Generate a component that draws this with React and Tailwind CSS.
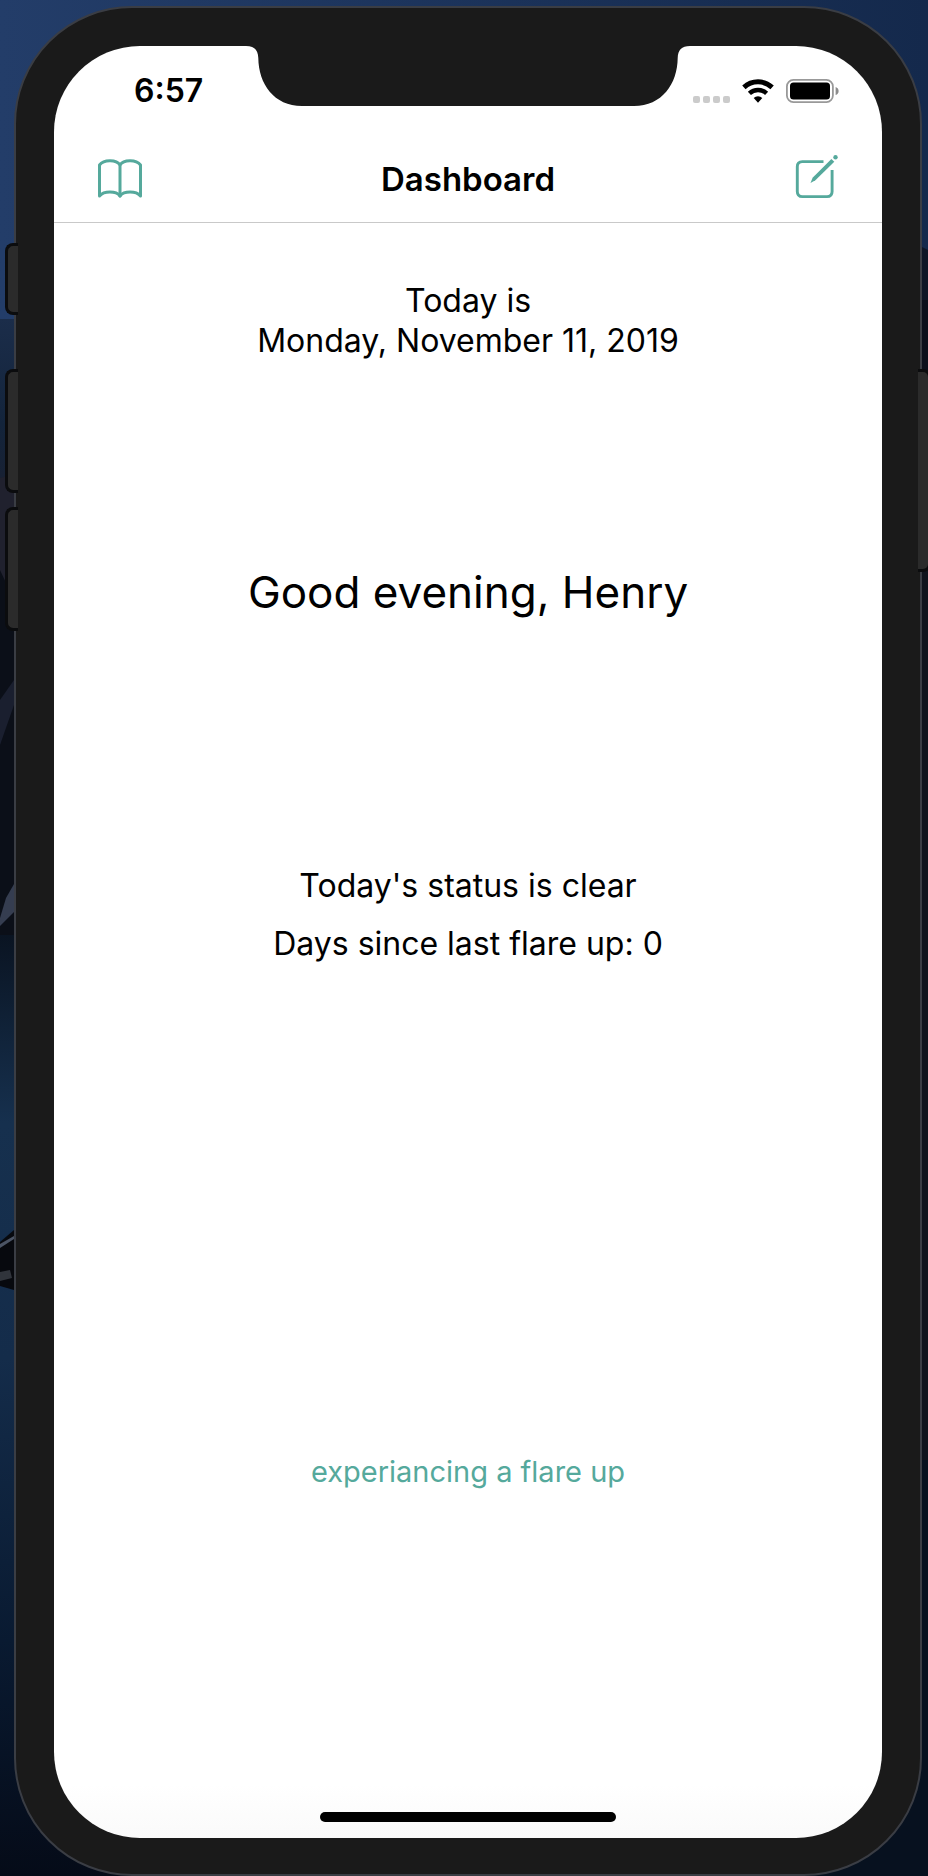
const BookIcon = () => (
  <svg viewBox="0 0 44 40" className="h-10 w-11" fill="none" stroke="currentColor" strokeWidth="3" strokeLinejoin="round" strokeLinecap="round" aria-hidden="true">
    <path d="M22 6C18.500 0.700 6 0.200 1.500 6V37C6 31.800 18 31.800 22 37C26 31.800 38 31.800 42.500 37V6C38 0.200 25.500 0.700 22 6Z" />
    <path d="M22 6V37" />
  </svg>
);

const ComposeIcon = () => (
  <svg viewBox="0 0 44 44" className="size-11" fill="none" stroke="currentColor" strokeWidth="2.900" aria-hidden="true">
    <path d="M29.500 6.600H8.400Q3.300 6.600 3.300 11.700V36.500Q3.300 41.600 8.400 41.600H33Q38.100 41.600 38.100 36.500V15" />
    <path d="M37.400 3.900L40.300 6.800L21.400 25.300L16.500 27.900L18.600 22.700Z" fill="currentColor" stroke="none" />
    <circle cx="41.500" cy="2.300" r="2.200" fill="currentColor" stroke="none" />
  </svg>
);

const WifiIcon = () => (
  <svg viewBox="0 0 32 24" className="h-6 w-8" fill="none" stroke="#000" strokeWidth="4.900" aria-hidden="true">
    <path d="M1.900 8.400A20.500 20.500 0 0 1 30.100 8.400" />
    <path d="M7.400 14.300A12.600 12.600 0 0 1 24.600 14.300" strokeWidth="4.500" />
    <path d="M11.700 19.100A6.200 6.200 0 0 1 20.300 19.100L16 23.700Z" fill="#000" stroke="none" />
  </svg>
);

const BatteryIcon = () => (
  <svg viewBox="0 0 53 24" className="h-6 w-[53px]" aria-hidden="true">
    <rect x="0.900" y="0.900" width="46" height="22.200" rx="6.500" fill="none" stroke="#999" strokeWidth="1.800" />
    <rect x="4" y="3.600" width="40" height="16.800" rx="3.500" fill="#000" />
    <path d="M49.600 8Q52.600 9 52.600 12T49.600 16Z" fill="#8c8c8c" />
  </svg>
);

const Wallpaper = () => (
  <svg viewBox="0 0 928 1876" preserveAspectRatio="none" className="absolute inset-0 size-full" aria-hidden="true">
    <defs>
      <linearGradient id="sky" x1="0" x2="1" y1="0" y2="0">
        <stop offset="0" stopColor="#233d69" />
        <stop offset="1" stopColor="#14294c" />
      </linearGradient>
      <linearGradient id="hill" x1="0" x2="0" y1="0" y2="1">
        <stop offset="0" stopColor="#1b2d4a" />
        <stop offset="0.500" stopColor="#13243b" />
        <stop offset="1" stopColor="#1c1e2c" />
      </linearGradient>
      <linearGradient id="water" x1="0" x2="0" y1="0" y2="1">
        <stop offset="0" stopColor="#0a1422" />
        <stop offset="0.200" stopColor="#16304e" />
        <stop offset="0.450" stopColor="#142c4a" />
        <stop offset="0.750" stopColor="#091a31" />
        <stop offset="1" stopColor="#050b18" />
      </linearGradient>
    </defs>
    <rect width="928" height="1876" fill="url(#sky)" />
    <rect y="319" width="464" height="210" fill="url(#hill)" />
    <path d="M0 478L14 474V940H0Z" fill="#20212e" />
    <path d="M0 570L14 600V940H0Z" fill="#0b0f18" />
    <path d="M0 700L14 680V705L0 745Z" fill="#1a1f2f" />
    <rect y="935" width="464" height="941" fill="url(#water)" />
    <path d="M0 918L6 898L14 884V912L0 926Z" fill="#353d50" />
    <path d="M0 1242L14 1230V1290L0 1286Z" fill="#07090e" />
    <path d="M0 1244L14 1236V1239L0 1248Z" fill="#4b5464" />
    <path d="M0 1272L10 1270L12 1278L0 1281Z" fill="#30343b" />
    <path d="M464 246H920L928 250V570H464Z" fill="#0e1626" />
    <rect x="464" y="300" width="464" height="260" fill="#0c101c" />
    <rect x="464" y="560" width="464" height="900" fill="#10141d" />
    <rect x="464" y="1460" width="464" height="416" fill="#07111f" />
  </svg>
);

const Notch = () => (
  <svg viewBox="0 0 444 60" className="absolute top-0 left-1/2 h-[60px] w-[444px] -translate-x-1/2" fill="#1a1a1a" aria-hidden="true">
    <path d="M0 0C8.500 0 12 4 12.300 12C12.600 38 28 60 56 60H388C416 60 431.400 38 431.700 12C432 4 435.500 0 444 0Z" />
  </svg>
);

const sideButton = "absolute border-[3px] border-[#0b0c0e] bg-[#2b2b2b]";

export default function App() {
  return (
    <div className="relative flex min-h-screen overflow-hidden bg-[#0b1626] pt-[6px] pr-[6px] pl-[14px] font-['Inter','Liberation_Sans',sans-serif] text-black">
      <Wallpaper />
      <div className="relative flex flex-1 rounded-[118px] border-2 border-[#3a3d44] bg-[#1a1a1a] p-[38px] pb-9">
        <span className={`${sideButton} top-[235px] -left-[11px] h-[72px] w-[13px] rounded-l-lg border-r-0`} />
        <span className={`${sideButton} top-[361px] -left-[11px] h-[124px] w-[13px] rounded-l-lg border-r-0`} />
        <span className={`${sideButton} top-[499px] -left-[11px] h-[124px] w-[13px] rounded-l-lg border-r-0`} />
        <span className={`${sideButton} top-[361px] -right-[11px] h-[203px] w-[13px] rounded-r-lg border-l-0`} />

        <div className="relative flex flex-1 flex-col overflow-hidden rounded-[86px] bg-linear-to-b from-white from-97% to-[#fafafa]">
          <Notch />

          <div className="flex h-[90px] items-center justify-between pr-[43px] pl-20">
            <time className="text-[32px] leading-9 font-semibold">6:57</time>
            <div className="flex items-center gap-3">
              <div className="flex gap-[3px] pt-4">
                <span className="size-[7px] rounded-xs bg-[#cbcbcb]" />
                <span className="size-[7px] rounded-xs bg-[#cbcbcb]" />
                <span className="size-[7px] rounded-xs bg-[#cbcbcb]" />
                <span className="size-[7px] rounded-xs bg-[#cbcbcb]" />
              </div>
              <WifiIcon />
              <BatteryIcon />
            </div>
          </div>

          <header className="flex h-[87px] items-center justify-between border-b border-[#c9c9c9] px-11">
            <button type="button" aria-label="Journal" className="text-[#55a99c]">
              <BookIcon />
            </button>
            <h1 className="text-[33px] leading-10 font-semibold">Dashboard</h1>
            <button type="button" aria-label="New entry" className="pb-1 text-[#55a99c]">
              <ComposeIcon />
            </button>
          </header>

          <main className="flex flex-1 flex-col items-center pt-[58px] text-center text-[32px] leading-10">
            <p>
              Today is
              <br />
              Monday, November 11, 2019
            </p>
            <p className="mt-[203px] text-[44px] leading-[56px]">Good evening, Henry</p>
            <p className="mt-[246px]">Today's status is clear</p>
            <p className="mt-[18px]">Days since last flare up: 0</p>
            <button type="button" className="mt-[488px] text-[29px] leading-10 text-[#55a99c]">
              experiancing a flare up
            </button>
            <div className="mt-auto mb-4 h-[10px] w-[296px] rounded-full bg-black" />
          </main>
        </div>
      </div>
    </div>
  );
}
